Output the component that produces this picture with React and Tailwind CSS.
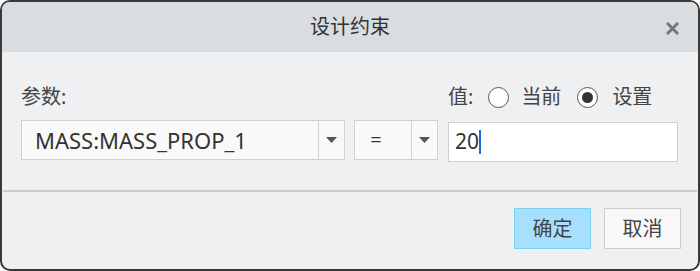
import React from 'react';

const cjk = { fontFamily: '"Noto Sans", "Noto Sans CJK SC", sans-serif' };

const Arrow = () => (
  <svg width="11" height="6" viewBox="0 0 11 6">
    <path d="M0 0 H11 L5.5 6 Z" fill="#555" />
  </svg>
);

const Radio = ({ checked }) => (
  <span className="w-[21px] h-[21px] rounded-full border border-[#555] bg-white flex items-center justify-center">
    {checked && <span className="w-[11px] h-[11px] rounded-full bg-[#333]" />}
  </span>
);

export default function App() {
  return (
    <div className="w-[700px] h-[271px] bg-white" style={cjk}>
      <div className="h-full flex flex-col border-2 border-[#3a3a3a] rounded-[10px] overflow-hidden bg-[#eff0f1] text-[#444]">
        <div className="h-[50px] shrink-0 bg-[#dadddf] flex items-center justify-center relative">
          <span className="text-[20px] text-[#333]">设计约束</span>
          <svg className="absolute right-[19px] top-[20px]" width="13" height="13" viewBox="0 0 13 13">
            <path d="M2 2 L11 11 M11 2 L2 11" stroke="#777" strokeWidth="3" strokeLinecap="square" />
          </svg>
        </div>

        <div className="grid grid-cols-[324px_84px_231px] gap-x-[9px] px-[19px] pt-[31px]">
          <div className="text-[20px] leading-[28px] self-end">参数:</div>
          <div />
          <div className="flex items-center text-[20px] leading-[28px] ml-px">
            <span>值:</span>
            <span className="ml-[15px]"><Radio /></span>
            <span className="ml-[12px]">当前</span>
            <span className="ml-[16px]"><Radio checked /></span>
            <span className="ml-[14px]">设置</span>
          </div>

          <div className="mt-[9px] h-[40px] flex border border-[#cfd0d2] bg-[#f9f9f9]">
            <div className="flex-1 flex items-center pl-[13px] text-[22px] text-[#333]">MASS:MASS_PROP_1</div>
            <div className="w-[26px] border-l border-[#cfd0d2] flex items-center justify-center"><Arrow /></div>
          </div>
          <div className="mt-[9px] h-[40px] flex border border-[#cfd0d2] bg-[#f9f9f9]">
            <div className="flex-1 flex items-center justify-center pr-[14px] text-[20px] text-[#333]">=</div>
            <div className="w-[26px] border-l border-[#cfd0d2] flex items-center justify-center"><Arrow /></div>
          </div>
          <div className="mt-[11px] h-[40px] ml-px flex items-center border border-[#cfd0d2] bg-white pl-[6px] text-[21px] text-[#333]">
            <span>20</span>
            <span className="w-[2px] h-[24px] bg-[#1a6fd6]" />
          </div>
        </div>

        <div className="mt-[28px] h-[2px] bg-[#cbcccd] mx-px" />

        <div className="flex justify-end gap-[13px] pr-[17px] pt-[16px]">
          <button className="w-[77px] h-[41px] bg-[#a6e0fe] border border-[#7fcff5] text-[20px] text-[#444]">确定</button>
          <button className="w-[77px] h-[41px] bg-[#f8f8f8] border border-[#cdcdcd] text-[20px] text-[#444]">取消</button>
        </div>
      </div>
    </div>
  );
}
